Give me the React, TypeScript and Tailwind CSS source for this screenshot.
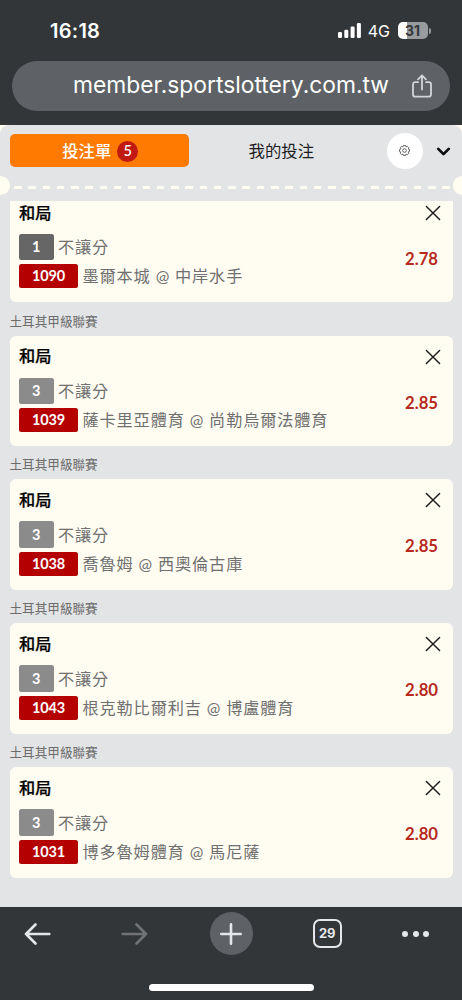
import { ChevronDown } from 'lucide-react';

type Bet = {
  league?: string;
  legs: number;
  code: string;
  match: string;
  odds: string;
};

const bets: Bet[] = [
  { legs: 1, code: '1090', match: '墨爾本城 @ 中岸水手', odds: '2.78' },
  { league: '土耳其甲級聯賽', legs: 3, code: '1039', match: '薩卡里亞體育 @ 尚勒烏爾法體育', odds: '2.85' },
  { league: '土耳其甲級聯賽', legs: 3, code: '1038', match: '喬魯姆 @ 西奧倫古庫', odds: '2.85' },
  { league: '土耳其甲級聯賽', legs: 3, code: '1043', match: '根克勒比爾利吉 @ 博盧體育', odds: '2.80' },
  { league: '土耳其甲級聯賽', legs: 3, code: '1031', match: '博多魯姆體育 @ 馬尼薩', odds: '2.80' },
];

function StatusBar() {
  return (
    <div className="flex h-[61px] items-center pl-[50px] pr-[31.5px] text-white">
      <span className="text-[20px] font-semibold leading-none tracking-[0.25px]">16:18</span>
      <svg className="ml-auto" width="23" height="15" viewBox="0 0 23 15" fill="currentColor">
        <rect x="0" y="9" width="4" height="6" rx="1.2" />
        <rect x="6.3" y="6.8" width="4" height="8.2" rx="1.2" />
        <rect x="12.6" y="3.6" width="4" height="11.4" rx="1.2" />
        <rect x="18.9" y="0" width="4" height="15" rx="1.2" />
      </svg>
      <span className="ml-[7px] text-[16px] leading-none">4G</span>
      <div className="ml-[7.5px] flex h-[17px] w-[30px] items-center justify-center rounded-[5px] bg-[linear-gradient(90deg,#fff_30%,#999b9d_30%)] text-[14px] font-bold leading-none text-[#35383b]">
        31
      </div>
      <div className="ml-px h-[6px] w-[2px] rounded-r-full bg-[#96989a]" />
    </div>
  );
}

function AddressBar() {
  return (
    <div className="mx-3 flex h-[49.5px] items-center rounded-full bg-[#5e6266] pl-[61px] pr-[17px]">
      <span className="-mt-px whitespace-nowrap text-[22.8px] leading-none tracking-[0.01px] text-white">member.sportslottery.com.tw</span>
      <svg className="ml-auto shrink-0" width="22" height="24" viewBox="0 0 22 24" fill="none" stroke="#d3d5d8" strokeWidth="1.8" strokeLinecap="round" strokeLinejoin="round">
        <path d="M7 8.2H4.2a2.2 2.2 0 0 0-2.2 2.2v10a2.2 2.2 0 0 0 2.2 2.2h13.6a2.2 2.2 0 0 0 2.2-2.2v-10a2.2 2.2 0 0 0-2.2-2.2H15" />
        <path d="M11 15.5V1.8M7 5.4l4-4 4 4" />
      </svg>
    </div>
  );
}

function SlipTabs() {
  return (
    <div className="flex h-[51px] items-center pl-[9.5px] pr-[8.5px]">
      <button className="flex h-[33.5px] w-[179.5px] items-center justify-center gap-[6px] rounded-[5px] bg-[#ff7a00] pl-[2px] pt-px text-[16.3px] font-medium text-white">
        投注單
        <span className="flex size-[21px] items-center justify-center rounded-full bg-[#c01a12] text-[14.5px] leading-none">5</span>
      </button>
      <button className="ml-[59.5px] pt-px text-[16.4px] text-[#1d1d1f]">我的投注</button>
      <button className="ml-auto flex size-9 items-center justify-center rounded-full bg-white">
        <svg width="11" height="11" viewBox="0 0 20 20" fill="none" stroke="#555" strokeWidth="1.6" strokeLinejoin="round">
          <path d="M8 1h4l.7 2.4 2.4-1.2 2.7 2.7-1.2 2.4L19 8v4l-2.4.7 1.2 2.4-2.7 2.7-2.4-1.2L12 19H8l-.7-2.4-2.4 1.2-2.7-2.7 1.2-2.4L1 12V8l2.4-.7-1.2-2.4 2.7-2.7 2.4 1.2z" />
          <circle cx="10" cy="10" r="3.3" />
        </svg>
      </button>
      <ChevronDown className="ml-[10px] mt-px shrink-0" size={21} strokeWidth={3.2} color="#111" />
    </div>
  );
}

function Perforation() {
  return (
    <div className="flex h-[24.5px] items-start">
      <div className="h-[19px] w-[9.5px] rounded-r-full bg-[#fffcf2]" />
      <div className="ml-[4.5px] mr-[3px] mt-[10px] h-[3px] flex-1 bg-[repeating-linear-gradient(90deg,#fffcf2_0_7.5px,transparent_7.5px_14.28px)]" />
      <div className="h-[19px] w-[9.5px] rounded-l-full bg-[#fffcf2]" />
    </div>
  );
}

function BetCard({ bet }: { bet: Bet }) {
  return (
    <div className="h-[110.5px] rounded-[6px] bg-[#fffcf2] pl-[9.5px] pr-[12px] pt-[10.5px]">
      <div className="flex h-[21px] items-center justify-between">
        <span className="text-[16.2px] font-medium text-black [-webkit-text-stroke:0.25px_#000]">和局</span>
        <svg width="16" height="16" viewBox="0 0 16 16" stroke="#1a1a1a" strokeWidth="1.4" strokeLinecap="round">
          <path d="M1.4 1.4l13.2 13.2M14.6 1.4L1.4 14.6" />
        </svg>
      </div>
      <div className="mt-[10.5px] flex items-center justify-between">
        <div className="text-[16.2px] tracking-[0.85px] text-[#707070]">
          <div className="flex h-[26.5px] items-center">
            <span className={`flex h-full w-[34.5px] items-center justify-center rounded-[2.5px] text-[14.5px] font-bold tracking-normal text-white ${bet.legs === 1 ? 'bg-[#666]' : 'bg-[#8b8b8b]'}`}>
              {bet.legs}
            </span>
            <span className="ml-[4.5px] pt-px">不讓分</span>
          </div>
          <div className="mt-[4px] flex h-[24px] items-center">
            <span className="flex h-full w-[59px] items-center justify-center rounded-[2.5px] bg-[#b50000] text-[14.5px] font-bold tracking-[-0.2px] text-white">{bet.code}</span>
            <span className="ml-[4.5px] whitespace-nowrap">{bet.match}</span>
          </div>
        </div>
        <span className="mr-[2.5px] -mt-[3.5px] text-[16.7px] font-bold text-[#b72a22]">{bet.odds}</span>
      </div>
    </div>
  );
}

function BottomBar() {
  return (
    <div className="h-[93px] bg-[#333639]">
      <div className="flex h-[53px] items-center pl-[24px] pr-[33px]">
        <svg width="27" height="22" viewBox="0 0 27 22" fill="none" stroke="#e4e7ea" strokeWidth="2.6" strokeLinecap="round" strokeLinejoin="round">
          <path d="M25.3 11H2M11.5 1.5L2 11l9.5 9.5" />
        </svg>
        <svg className="ml-[70px]" width="27" height="22" viewBox="0 0 27 22" fill="none" stroke="#707275" strokeWidth="2.6" strokeLinecap="round" strokeLinejoin="round">
          <path d="M1.7 11H25M15.5 1.5L25 11l-9.5 9.5" />
        </svg>
        <div className="ml-[61.5px] flex size-[43px] items-center justify-center rounded-full bg-[#5e6266]">
          <svg width="24" height="24" viewBox="0 0 24 24" stroke="#e4e7ea" strokeWidth="2.6" strokeLinecap="round">
            <path d="M12 2.3v19.4M2.3 12h19.4" />
          </svg>
        </div>
        <div className="ml-[60px] flex size-[29.5px] items-center justify-center rounded-[7px] border-[2.5px] border-[#e4e7ea] text-[13px] font-bold leading-none text-[#e4e7ea]">29</div>
        <div className="ml-auto flex gap-[4.5px]">
          <span className="size-[6px] rounded-full bg-[#e4e7ea]" />
          <span className="size-[6px] rounded-full bg-[#e4e7ea]" />
          <span className="size-[6px] rounded-full bg-[#e4e7ea]" />
        </div>
      </div>
      <div className="mx-auto mt-[24px] h-[6.5px] w-[165px] rounded-full bg-white" />
    </div>
  );
}

export default function App() {
  return (
    <div className="flex h-[1000px] w-[462px] flex-col overflow-hidden bg-[#333639] font-[Inter,'Noto_Sans_CJK_TC',sans-serif]">
      <header className="h-[125px] shrink-0">
        <StatusBar />
        <AddressBar />
      </header>
      <main className="flex min-h-0 flex-1 flex-col bg-[#fffcf2] font-[Lato,'Noto_Sans_CJK_TC',sans-serif]">
        <div className="flex min-h-0 flex-1 flex-col rounded-t-[9px] bg-[#e3e4e6]">
          <SlipTabs />
          <Perforation />
          <div className="min-h-0 flex-1 overflow-hidden px-[9.5px]">
            {/* list is scrolled a little, the first card is cut at the top */}
            <div className="-mt-[8.8px]">
              {bets.map((bet) => (
                <div key={bet.code}>
                  {bet.league && (
                    <div className="flex h-[33.4px] items-center pt-[6px] text-[12.6px] leading-none text-[#6c6c6c]">{bet.league}</div>
                  )}
                  <BetCard bet={bet} />
                </div>
              ))}
            </div>
          </div>
        </div>
      </main>
      <BottomBar />
    </div>
  );
}
